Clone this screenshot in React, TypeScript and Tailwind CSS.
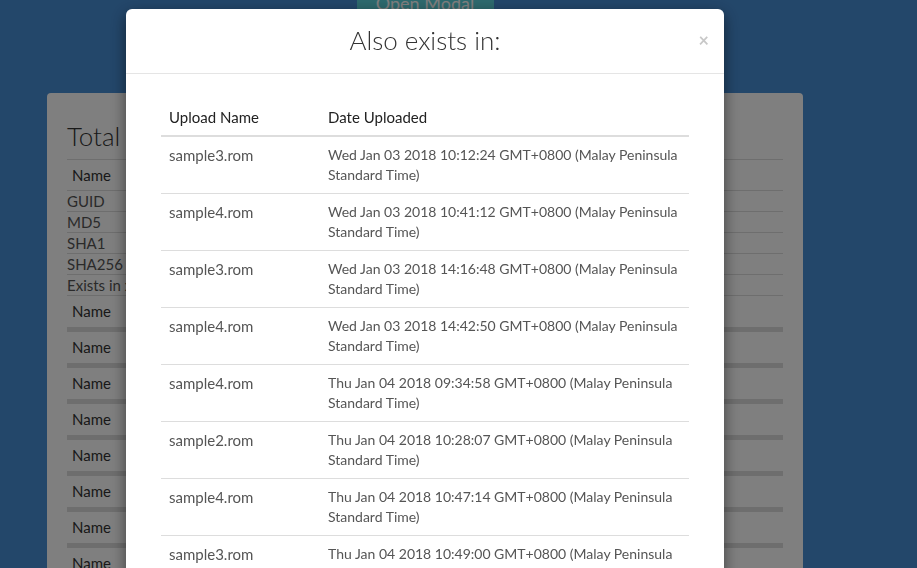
const uploads = [
  { name: "sample3.rom", date: "Wed Jan 03 2018 10:12:24 GMT+0800 (Malay Peninsula Standard Time)" },
  { name: "sample4.rom", date: "Wed Jan 03 2018 10:41:12 GMT+0800 (Malay Peninsula Standard Time)" },
  { name: "sample3.rom", date: "Wed Jan 03 2018 14:16:48 GMT+0800 (Malay Peninsula Standard Time)" },
  { name: "sample4.rom", date: "Wed Jan 03 2018 14:42:50 GMT+0800 (Malay Peninsula Standard Time)" },
  { name: "sample4.rom", date: "Thu Jan 04 2018 09:34:58 GMT+0800 (Malay Peninsula Standard Time)" },
  { name: "sample2.rom", date: "Thu Jan 04 2018 10:28:07 GMT+0800 (Malay Peninsula Standard Time)" },
  { name: "sample4.rom", date: "Thu Jan 04 2018 10:47:14 GMT+0800 (Malay Peninsula Standard Time)" },
  { name: "sample3.rom", date: "Thu Jan 04 2018 10:49:00 GMT+0800 (Malay Peninsula Standard Time)" },
  { name: "sample4.rom", date: "Thu Jan 04 2018 11:02:31 GMT+0800 (Malay Peninsula Standard Time)" },
];

const hashes = ["GUID", "MD5", "SHA1", "SHA256", "Exists in x"];

function Panel() {
  return (
    <div className="mx-[47px] mt-[67px] rounded bg-white px-5 pt-[26px] pb-8">
      <h2 className="text-[26px] font-light leading-[34px] text-[#333]">Total files</h2>
      <div className="mt-[6px] border-t border-[#ddd]">
        <div className="h-[31px] border-b border-[#ddd] px-[5px] text-[15px] leading-[30px] text-[#333]">Name</div>
        {hashes.map((h) => (
          <div key={h} className="h-[21px] border-b border-[#ddd] text-[15px] leading-[20px] text-[#555]">
            {h}
          </div>
        ))}
        {Array.from({ length: 9 }).map((_, i) => (
          <div key={i}>
            <div className="h-[31px] px-[5px] text-[15px] leading-[31px] text-[#333]">Name</div>
            <div className="h-[5px] bg-[#ddd]" />
          </div>
        ))}
      </div>
    </div>
  );
}

function Modal() {
  return (
    <div className="fixed inset-0 bg-black/50">
      <div className="flex w-[850px] justify-center pt-[9px]">
        <div className="relative w-[598px] rounded-md bg-white shadow-[0_5px_15px_rgba(0,0,0,0.5)]">
          <div className="h-[65px] border-b border-[#e5e5e5] pt-[15px] text-center">
            <h3 className="text-[26px] font-light leading-[32px] text-[#333]">Also exists in:</h3>
            <span className="absolute right-[15px] top-[22px] text-[18px] font-bold leading-none text-[#c8c8c8]">×</span>
          </div>
          <div className="px-[35px] pt-[25px]">
            <table className="w-full border-collapse text-left text-[15px] leading-[20px]">
              <thead>
                <tr className="border-b-2 border-[#ddd]">
                  <th className="w-[159px] p-2 font-normal text-[#222]">Upload Name</th>
                  <th className="p-2 font-normal text-[#222]">Date Uploaded</th>
                </tr>
              </thead>
              <tbody>
                {uploads.map((u, i) => (
                  <tr key={i} className="border-t border-[#ddd] align-top text-[#555]">
                    <td className="p-2">{u.name}</td>
                    <td className="p-2 text-[14px]">{u.date}</td>
                  </tr>
                ))}
              </tbody>
            </table>
          </div>
        </div>
      </div>
    </div>
  );
}

export default function App() {
  return (
    <div className="h-[568px] overflow-hidden bg-[#478ed5] font-['Lato',sans-serif]">
      <div className="w-[850px]">
        <div className="flex justify-center">
          <button className="-mt-[20px] h-[46px] w-[137px] rounded bg-[#5cd4dc] text-[18px] leading-[46px] text-white">
            Open Modal
          </button>
        </div>
        <Panel />
      </div>
      <Modal />
    </div>
  );
}
